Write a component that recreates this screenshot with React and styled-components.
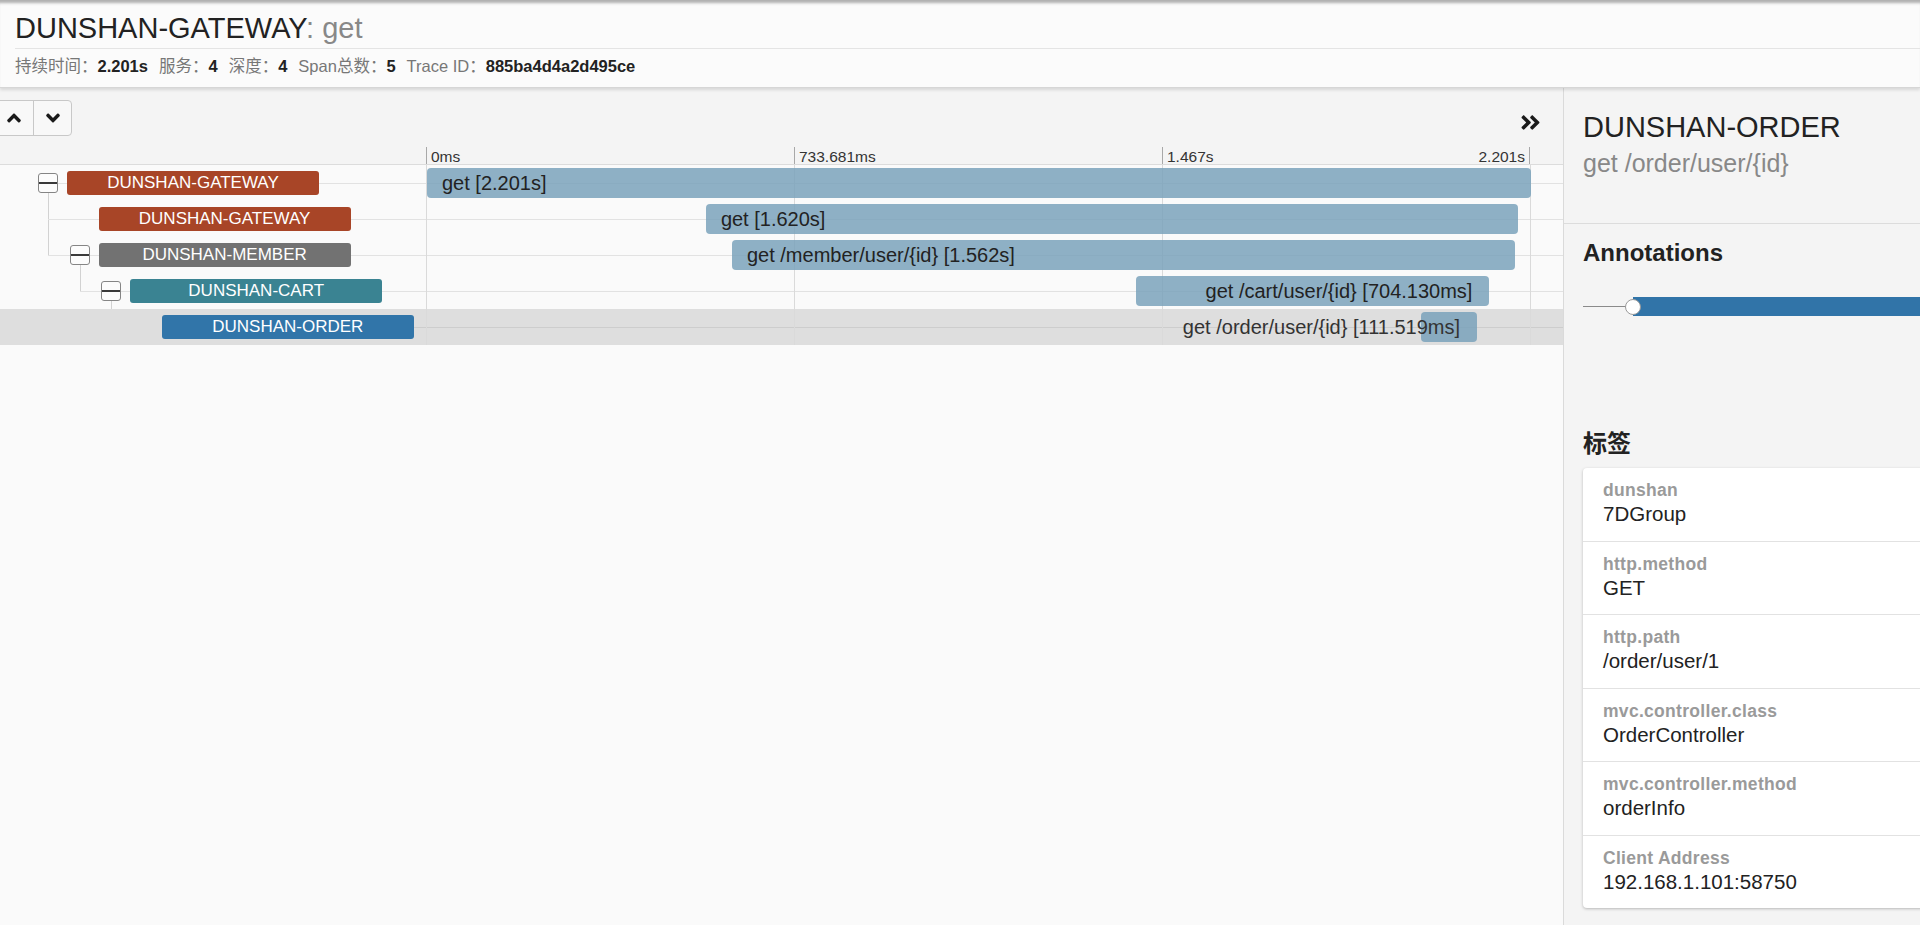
import React from "react";
import styled, { createGlobalStyle, css } from "styled-components";
import { FaAngleUp, FaAngleDown, FaAngleDoubleRight } from "react-icons/fa";

const GlobalStyle = createGlobalStyle`
  html, body { margin: 0; padding: 0; }
  body {
    font-family: "Liberation Sans", "Noto Sans CJK SC", Arial, sans-serif;
    background: #fafafa;
    color: #222;
  }
  * { box-sizing: border-box; }
`;

const TOTAL_MS = 2201;
const TIMELINE_W = 1104;
const INDENT = 31.6;
const BOX_X0 = 38;
const ROW_H = 36;

const spans = [
  { service: "DUNSHAN-GATEWAY", color: "#a84527", depth: 0, lastChild: 2, start: 0, dur: 2201, name: "get [2.201s]" },
  { service: "DUNSHAN-GATEWAY", color: "#a84527", depth: 1, start: 556, dur: 1620, name: "get [1.620s]" },
  { service: "DUNSHAN-MEMBER", color: "#727272", depth: 1, lastChild: 1, start: 608, dur: 1562, name: "get /member/user/{id} [1.562s]" },
  { service: "DUNSHAN-CART", color: "#3a8392", depth: 2, lastChild: 1, start: 1414, dur: 704.13, name: "get /cart/user/{id} [704.130ms]" },
  { service: "DUNSHAN-ORDER", color: "#3175a9", depth: 3, start: 1982, dur: 111.519, name: "get /order/user/{id} [111.519ms]", selected: true },
];

const tags = [
  ["dunshan", "7DGroup"],
  ["http.method", "GET"],
  ["http.path", "/order/user/1"],
  ["mvc.controller.class", "OrderController"],
  ["mvc.controller.method", "orderInfo"],
  ["Client Address", "192.168.1.101:58750"],
];

const Page = styled.div`
  width: 1920px;
  height: 925px;
  display: flex;
  flex-direction: column;
  overflow: hidden;
`;

const Header = styled.header`
  position: relative;
  z-index: 2;
  background: #fbfbfb;
  padding: 11px 0 10px 15px;
  border-bottom: 1px solid #d6d6d6;
  box-shadow: inset 0 5px 3px -2px rgba(0, 0, 0, 0.3), 0 2px 3px rgba(0, 0, 0, 0.12);
`;

const Title = styled.h1`
  margin: 0;
  font-size: 29px;
  line-height: 34px;
  font-weight: 400;
  color: #222;
  padding-bottom: 3px;
  border-bottom: 1px solid #e4e4e4;
`;

const TitleSub = styled.span`
  color: #888;
`;

const Meta = styled.div`
  display: flex;
  padding-top: 6px;
  font-size: 16.5px;
  line-height: 22px;
  color: #777;
`;

const MetaItem = styled.span`
  margin-right: 11px;
  white-space: nowrap;
`;

const MetaValue = styled.b`
  color: #222;
  font-weight: 700;
`;

const Body = styled.div`
  flex: 1;
  display: flex;
  min-height: 0;
`;

const LeftPane = styled.main`
  width: 1563px;
  flex: none;
  background: #fafafa;
  display: flex;
  flex-direction: column;
`;

const Toolbar = styled.div`
  height: 56px;
  background: #f4f4f4;
  display: flex;
  justify-content: space-between;
  align-items: flex-start;
  padding: 12px 21px 0 0;
`;

const ButtonGroup = styled.div`
  display: flex;
  margin-left: -6px;
  height: 36px;
  border: 1px solid #c8c8c8;
  border-radius: 4px;
  overflow: hidden;
  background: #f8f8f8;
`;

const NavButton = styled.button`
  width: 38px;
  height: 34px;
  padding: 0;
  border: none;
  background: transparent;
  display: flex;
  align-items: center;
  justify-content: center;
  color: #1a1a1a;
  & + & { border-left: 1px solid #c8c8c8; }
`;

const ExpandButton = styled.button`
  margin-top: 11px;
  padding: 0;
  border: none;
  background: transparent;
  color: #1a1a1a;
  display: flex;
`;

const AxisHeader = styled.div`
  height: 21px;
  background: #f4f4f4;
  border-bottom: 1px solid #dcdcdc;
  padding-left: 426px;
  display: flex;
  align-items: flex-end;
`;

const TickCol = styled.div`
  width: 368px;
  height: 17px;
  border-left: 1px solid #a8a8a8;
  padding: 1px 4px 0;
  display: flex;
  justify-content: space-between;
  font-size: 15.5px;
  line-height: 17px;
  color: #333;
  ${(p) => p.$last && css`border-right: 1px solid #a8a8a8;`}
`;

const Rows = styled.div`
  display: flex;
  flex-direction: column;
`;

const Row = styled.div`
  position: relative;
  height: ${ROW_H}px;
  display: flex;
  background: ${(p) => (p.$selected ? "#dedede" : "transparent")};
  &::before {
    content: "";
    position: absolute;
    left: ${(p) => p.$lineStart}px;
    right: 0;
    top: 18px;
    height: 1px;
    background: ${(p) => (p.$selected ? "#cdcdcd" : "#e2e2e2")};
  }
  ${(p) =>
    p.$connectorH &&
    css`
      &::after {
        content: "";
        position: absolute;
        left: ${p.$connectorX}px;
        top: 28px;
        width: 1px;
        height: ${p.$connectorH}px;
        background: #d2d2d2;
      }
    `}
`;

const LabelCell = styled.div`
  position: relative;
  width: 426px;
  flex: none;
  display: flex;
  align-items: center;
  padding-left: ${(p) => p.$indent}px;
`;

const ToggleBox = styled.span`
  position: relative;
  width: 20px;
  height: 20px;
  flex: none;
  margin-right: 9px;
  border: 1px solid #858585;
  border-radius: 3px;
  background: #fcfcfc;
  visibility: ${(p) => (p.$hidden ? "hidden" : "visible")};
  &::after {
    content: "";
    position: absolute;
    left: 0;
    right: 0;
    top: 8px;
    height: 2px;
    background: #3a3a3a;
  }
`;

const ServiceTag = styled.span`
  position: relative;
  width: 252px;
  height: 24px;
  flex: none;
  border-radius: 3px;
  background: ${(p) => p.$color};
  color: #fff;
  font-size: 17px;
  line-height: 24px;
  text-align: center;
  white-space: nowrap;
`;

const TimelineCell = styled.div`
  position: relative;
  flex: 1;
  border-left: 1px solid transparent;
  background-image: linear-gradient(to right, #dadada 1px, transparent 1px);
  background-size: ${TIMELINE_W / 3}px 100%;
  background-repeat: repeat-x;
  background-position: -1px 0;
`;

const SpanBar = styled.div`
  position: absolute;
  top: 3px;
  height: 30px;
  border-radius: 4px;
  background: rgba(118, 160, 185, 0.82);
  display: flex;
  align-items: center;
  justify-content: ${(p) => (p.$alignRight ? "flex-end" : "flex-start")};
  padding: ${(p) => (p.$alignRight ? "0 17px 0 0" : "0 0 0 15px")};
  font-size: 20px;
  color: ${(p) => (p.$selected ? "#333" : "#222")};
  white-space: nowrap;
`;

const RightPane = styled.aside`
  flex: 1;
  min-width: 0;
  background: #f4f4f4;
  border-left: 1px solid #dadada;
  overflow: hidden;
`;

const SpanHeader = styled.div`
  padding: 23px 0 46px 19px;
  border-bottom: 1px solid #dcdcdc;
`;

const SpanService = styled.div`
  font-size: 29px;
  line-height: 32px;
  color: #222;
  white-space: nowrap;
`;

const SpanName = styled.div`
  margin-top: 6px;
  font-size: 25px;
  line-height: 28px;
  color: #888;
  white-space: nowrap;
`;

const Section = styled.section`
  padding: 15px 0 0 19px;
`;

const SectionTitle = styled.h2`
  margin: ${(p) => p.$top || 0}px 0 0;
  font-size: 24px;
  line-height: 28px;
  font-weight: 700;
  color: #222;
`;

const AnnotationTrack = styled.div`
  margin-top: 30px;
  height: 19px;
  display: flex;
  align-items: center;
`;

const TrackLine = styled.span`
  width: 43px;
  height: 1.5px;
  background: #8a8a8a;
  flex: none;
`;

const TrackDot = styled.span`
  position: relative;
  z-index: 1;
  width: 16px;
  height: 16px;
  flex: none;
  margin-left: -1px;
  border-radius: 50%;
  background: #fff;
  border: 1.5px solid #9a9a9a;
`;

const TrackBar = styled.span`
  flex: none;
  width: 400px;
  height: 19px;
  margin-left: -8px;
  background: #3174a8;
`;

const TagCard = styled.div`
  margin-top: 10px;
  width: 420px;
  background: #fff;
  border-radius: 4px 0 0 4px;
  box-shadow: 0 1px 3px rgba(0, 0, 0, 0.25);
`;

const TagRow = styled.div`
  padding: 12px 20px 14.5px;
  & + & { border-top: 1px solid #e2e2e2; }
`;

const TagKey = styled.div`
  font-size: 17.5px;
  line-height: 20px;
  font-weight: 700;
  letter-spacing: 0.3px;
  color: #9a9a9a;
`;

const TagValue = styled.div`
  margin-top: 2px;
  font-size: 20.5px;
  line-height: 24px;
  color: #222;
`;

function SpanRow({ span }) {
  const boxX = BOX_X0 + INDENT * span.depth;
  const parentConnector = BOX_X0 + INDENT * (span.depth - 1) + 10;
  const lineStart = span.selected ? boxX + 29 : span.depth === 0 ? boxX : parentConnector;
  const connectorH = span.lastChild ? span.lastChild * ROW_H + 18 - 28 : 0;
  const left = (span.start / TOTAL_MS) * TIMELINE_W;
  const width = (span.dur / TOTAL_MS) * TIMELINE_W;
  const alignRight = span.start / TOTAL_MS > 0.5;
  return (
    <Row
      $selected={span.selected}
      $lineStart={lineStart}
      $connectorX={boxX + 10}
      $connectorH={connectorH}
    >
      <LabelCell $indent={boxX}>
        <ToggleBox $hidden={!span.lastChild} />
        <ServiceTag $color={span.color}>{span.service}</ServiceTag>
      </LabelCell>
      <TimelineCell>
        <SpanBar
          $alignRight={alignRight}
          $selected={span.selected}
          style={{ left: `${left}px`, width: `${width}px` }}
        >
          {span.name}
        </SpanBar>
      </TimelineCell>
    </Row>
  );
}

export default function App() {
  return (
    <Page>
      <GlobalStyle />
      <Header>
        <Title>
          DUNSHAN-GATEWAY<TitleSub>: get</TitleSub>
        </Title>
        <Meta>
          <MetaItem>持续时间：<MetaValue>2.201s</MetaValue></MetaItem>
          <MetaItem>服务：<MetaValue>4</MetaValue></MetaItem>
          <MetaItem>深度：<MetaValue>4</MetaValue></MetaItem>
          <MetaItem>Span总数：<MetaValue>5</MetaValue></MetaItem>
          <MetaItem>Trace ID：<MetaValue>885ba4d4a2d495ce</MetaValue></MetaItem>
        </Meta>
      </Header>
      <Body>
        <LeftPane>
          <Toolbar>
            <ButtonGroup>
              <NavButton aria-label="up"><FaAngleUp size={22} /></NavButton>
              <NavButton aria-label="down"><FaAngleDown size={22} /></NavButton>
            </ButtonGroup>
            <ExpandButton aria-label="expand"><FaAngleDoubleRight size={23} /></ExpandButton>
          </Toolbar>
          <AxisHeader>
            <TickCol><span>0ms</span></TickCol>
            <TickCol><span>733.681ms</span></TickCol>
            <TickCol $last><span>1.467s</span><span>2.201s</span></TickCol>
          </AxisHeader>
          <Rows>
            {spans.map((s, i) => (
              <SpanRow key={i} span={s} />
            ))}
          </Rows>
        </LeftPane>
        <RightPane>
          <SpanHeader>
            <SpanService>DUNSHAN-ORDER</SpanService>
            <SpanName>get /order/user/{"{id}"}</SpanName>
          </SpanHeader>
          <Section>
            <SectionTitle>Annotations</SectionTitle>
            <AnnotationTrack>
              <TrackLine />
              <TrackDot />
              <TrackBar />
            </AnnotationTrack>
            <SectionTitle $top={114}>标签</SectionTitle>
            <TagCard>
              {tags.map(([k, v]) => (
                <TagRow key={k}>
                  <TagKey>{k}</TagKey>
                  <TagValue>{v}</TagValue>
                </TagRow>
              ))}
            </TagCard>
          </Section>
        </RightPane>
      </Body>
    </Page>
  );
}
